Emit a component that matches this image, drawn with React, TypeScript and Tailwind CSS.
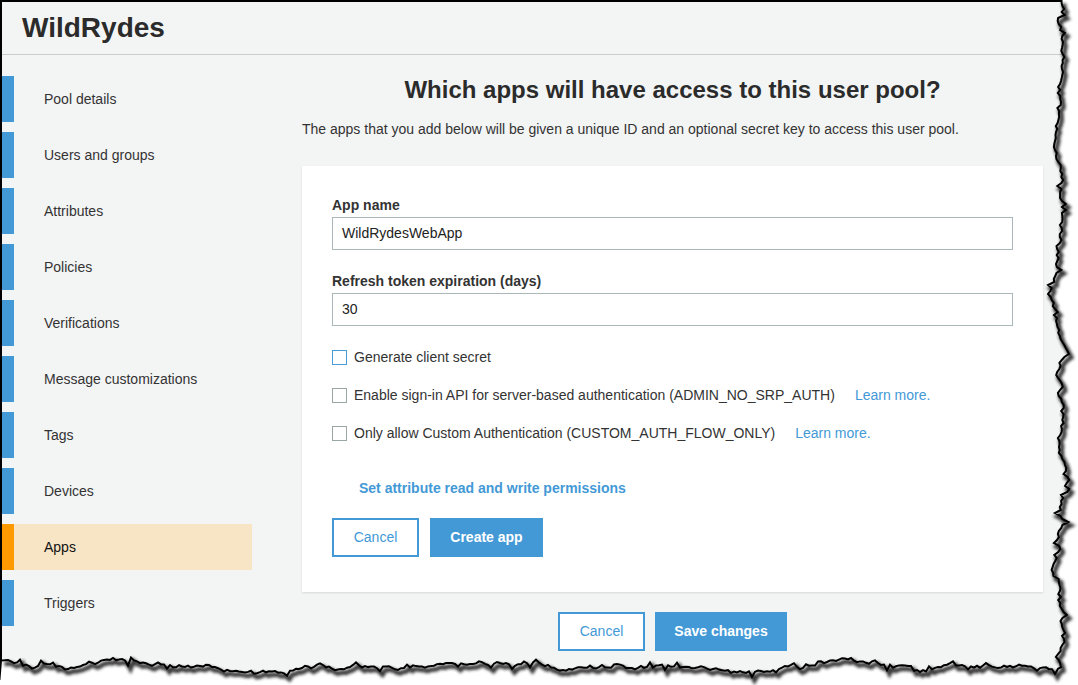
import React from "react";

const navItems = [
  "Pool details",
  "Users and groups",
  "Attributes",
  "Policies",
  "Verifications",
  "Message customizations",
  "Tags",
  "Devices",
  "Apps",
  "Triggers",
];

function makeRand(seed: number) {
  let s = seed;
  return () => {
    s = (s * 1103515245 + 12345) % 2147483648;
    return s / 2147483648;
  };
}

function jag(count: number, seed: number) {
  const r = makeRand(seed);
  const out: number[] = [];
  let v = 0;
  for (let i = 0; i < count; i++) {
    v += (r() - 0.5) * 3.6;
    v *= 0.9;
    const spike = r() < 0.2 ? (r() - 0.5) * 6 : 0;
    out.push(v + spike);
  }
  return out;
}

function TornEdge() {
  const rightX = 1061;
  const bottomY = 666;
  const pts: [number, number][] = [];
  const rj = jag(Math.ceil(bottomY / 3) + 1, 7);
  for (let i = 0; i * 3 <= bottomY; i++) {
    pts.push([rightX + rj[i] * 1.5, i * 3]);
  }
  const bj = jag(Math.ceil(rightX / 3) + 1, 19);
  for (let i = 0; i * 3 <= rightX; i++) {
    pts.push([rightX - i * 3, bottomY + bj[i] * 1.4]);
  }
  const line = pts.map((p, i) => `${i === 0 ? "M" : "L"}${p[0].toFixed(1)} ${p[1].toFixed(1)}`).join(" ");
  const outside = `${line} L0 685 L1078 685 L1078 0 Z`;
  return (
    <svg className="absolute inset-0 pointer-events-none" width="1078" height="685" viewBox="0 0 1078 685">
      <defs>
        <filter id="blur" x="-10%" y="-10%" width="120%" height="120%">
          <feGaussianBlur stdDeviation="1.8" />
        </filter>
      </defs>
      <path d={outside} fill="#ffffff" />
      <path d={line} fill="none" stroke="#222222" strokeWidth="4.5" filter="url(#blur)" transform="translate(2.5 3.5)" opacity="0.9" />
      <path d={line} fill="none" stroke="#000000" strokeWidth="2" />
    </svg>
  );
}

function Checkbox({ label, focused, link }: { label: string; focused?: boolean; link?: boolean }) {
  return (
    <div className="flex items-center h-[20px]">
      <div className={`w-[15px] h-[15px] bg-white border ${focused ? "border-[#4a9ad6]" : "border-[#9aa5a6]"}`} />
      <span className="ml-[7px] text-[14px] text-[#333333]">{label}</span>
      {link && <span className="ml-[20px] text-[14px] text-[#4399d6]">Learn more.</span>}
    </div>
  );
}

export default function App() {
  return (
    <div className="relative w-[1078px] h-[685px] bg-white overflow-hidden" style={{ fontFamily: '"Liberation Sans", Arial, Helvetica, sans-serif' }}>
      <div className="w-[1072px] h-[680px] border-l-2 border-t-2 border-black bg-[#f3f5f5] flex flex-col">
        <div className="h-[53px] border-b border-[#cccccc] pl-[20px] flex items-center">
          <span className="text-[28px] font-bold text-[#2b2b2b]">WildRydes</span>
        </div>
        <div className="flex">
          <div className="w-[250px] pt-[21px] flex flex-col gap-[10px]">
            {navItems.map((item) => {
              const active = item === "Apps";
              return (
                <div key={item} className={`h-[46px] flex items-center ${active ? "bg-[#f8e5c6]" : ""}`}>
                  <div className={`w-[12px] h-full ${active ? "bg-[#ff9900]" : "bg-[#4399d6]"}`} />
                  <span className={`pl-[30px] text-[14px] ${active ? "text-[#111111]" : "text-[#333333]"}`}>{item}</span>
                </div>
              );
            })}
          </div>
          <div className="ml-[50px] w-[741px] flex flex-col">
            <div className="mt-[20px] h-[30px] leading-[30px] text-center text-[24px] font-bold text-[#2b2b2b]">
              Which apps will have access to this user pool?
            </div>
            <div className="mt-[15px] h-[18px] leading-[18px] text-[14px] text-[#333333]">
              The apps that you add below will be given a unique ID and an optional secret key to access this user pool.
            </div>
            <div className="mt-[28px] bg-white shadow-[0_1px_2px_rgba(0,0,0,0.12)] px-[30px] pt-[31px] pb-[35px] flex flex-col">
              <div className="h-[16px] leading-[16px] text-[14px] font-bold text-[#333333]">App name</div>
              <div className="mt-[4px] h-[33px] border border-[#aab7b8] flex items-center pl-[9px] text-[14px] text-[#222222]">
                WildRydesWebApp
              </div>
              <div className="mt-[23px] h-[16px] leading-[16px] text-[14px] font-bold text-[#333333]">
                Refresh token expiration (days)
              </div>
              <div className="mt-[4px] h-[33px] border border-[#aab7b8] flex items-center pl-[9px] text-[14px] text-[#222222]">
                30
              </div>
              <div className="mt-[21px] flex flex-col gap-[18px]">
                <Checkbox label="Generate client secret" focused />
                <Checkbox label="Enable sign-in API for server-based authentication (ADMIN_NO_SRP_AUTH)" link />
                <Checkbox label="Only allow Custom Authentication (CUSTOM_AUTH_FLOW_ONLY)" link />
              </div>
              <div className="mt-[35px] ml-[27px] h-[20px] leading-[20px] text-[14px] font-bold text-[#4399d6]">
                Set attribute read and write permissions
              </div>
              <div className="mt-[20px] flex gap-[11px]">
                <div className="w-[87px] h-[39px] border-2 border-[#4399d6] bg-white flex items-center justify-center text-[14px] text-[#4399d6]">
                  Cancel
                </div>
                <div className="w-[113px] h-[39px] bg-[#4399d6] flex items-center justify-center text-[14px] font-bold text-white">
                  Create app
                </div>
              </div>
            </div>
            <div className="mt-[20px] flex justify-center gap-[10px]">
              <div className="w-[87px] h-[39px] border-2 border-[#4399d6] bg-white flex items-center justify-center text-[14px] text-[#4399d6]">
                Cancel
              </div>
              <div className="w-[132px] h-[39px] bg-[#4399d6] flex items-center justify-center text-[14px] font-bold text-white">
                Save changes
              </div>
            </div>
          </div>
        </div>
      </div>
      <TornEdge />
    </div>
  );
}
